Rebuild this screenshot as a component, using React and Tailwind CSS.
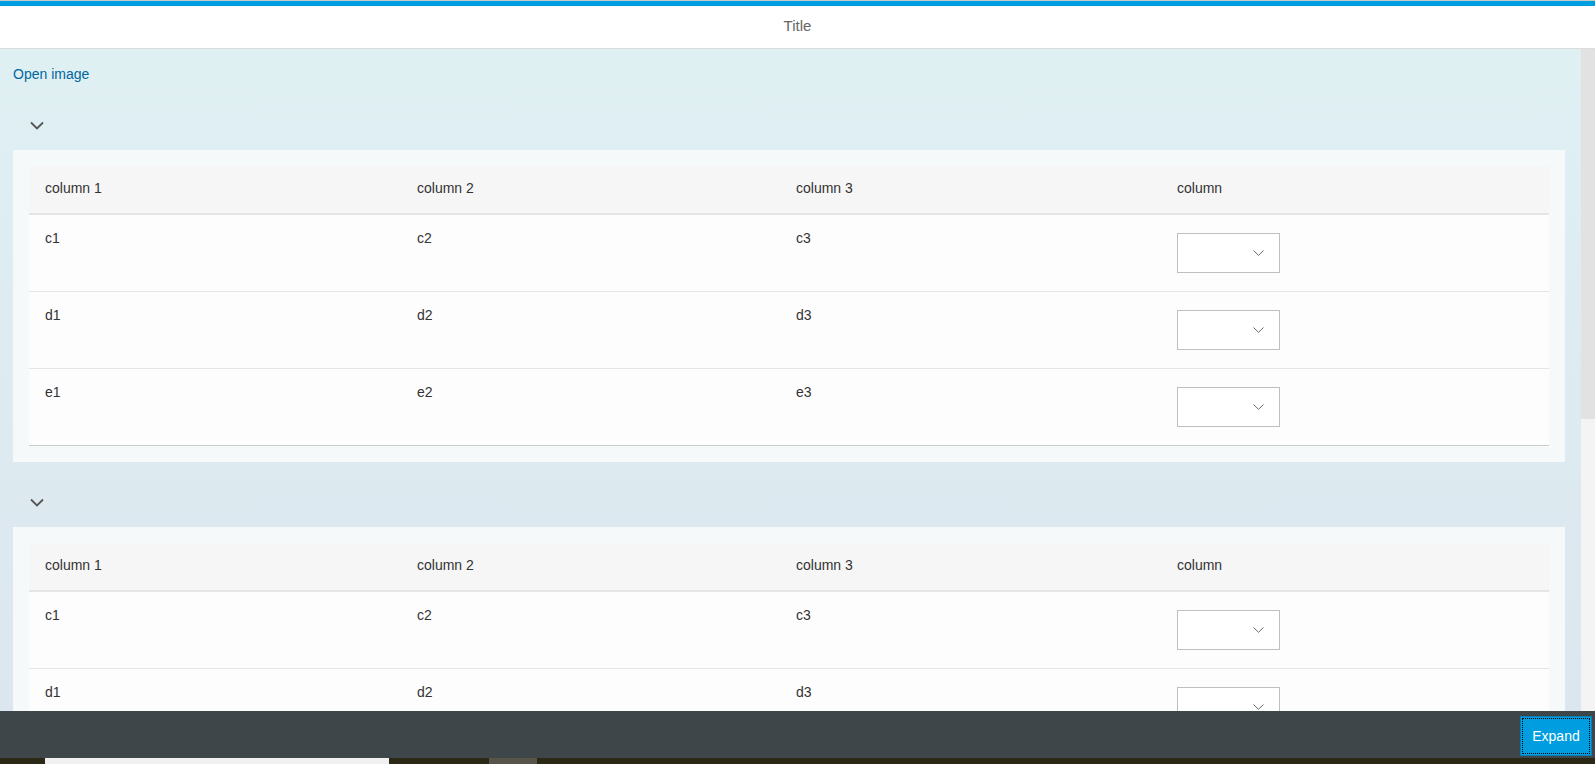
import React from 'react';

const rows = [
  ['c1', 'c2', 'c3'],
  ['d1', 'd2', 'd3'],
  ['e1', 'e2', 'e3'],
];

const gridCols = 'grid grid-cols-[372px_379px_381px_1fr]';

const Chevron = ({ className }) => (
  <svg width="14" height="9" viewBox="0 0 14 9" className={className}>
    <path d="M1 1.5 L7 7.5 L13 1.5" fill="none" stroke="currentColor" strokeWidth="1.8" />
  </svg>
);

const Select = () => (
  <div className="w-[103px] h-[40px] border border-[#bfbfbf] bg-white flex items-center justify-end pr-[15px]">
    <svg width="11" height="6" viewBox="0 0 11 6" className="text-[#6a6a6a]">
      <path d="M0.5 0.5 L5.5 5.3 L10.5 0.5" fill="none" stroke="currentColor" strokeWidth="1" />
    </svg>
  </div>
);

const TableCard = ({ items }) => (
  <div className="bg-[#f5f9fa] px-4 pt-4 pb-4">
    {/* Header */}
    <div className={`${gridCols} h-[49px] bg-[#f6f6f6] border-b-2 border-[#e5e5e5] items-center pb-[2px]`}>
      {['column 1', 'column 2', 'column 3', 'column'].map((c) => (
        <div key={c} className="pl-4">{c}</div>
      ))}
    </div>

    {/* Rows */}
    {items.map((r, i) => (
      <div
        key={i}
        className={`${gridCols} h-[77px] bg-[#fdfdfd] border-b ${
          i === items.length - 1 ? 'border-[#cccccc]' : 'border-[#e5e5e5]'
        }`}
      >
        {r.map((cell) => (
          <div key={cell} className="pl-4 pt-[15px] leading-4">{cell}</div>
        ))}
        <div className="pl-4 pt-[18px]">
          <Select />
        </div>
      </div>
    ))}
  </div>
);

const Section = ({ className, items }) => (
  <div className={className}>
    <div className="h-[50px] flex items-center pl-[17px]">
      <Chevron className="text-[#555]" />
    </div>
    <TableCard items={items} />
  </div>
);

export default function App() {
  return (
    <div className="w-[1595px] h-[764px] overflow-hidden flex flex-col text-[14px] text-[#333] font-['Liberation_Sans',Arial,sans-serif]">
      {/* Top shell bar */}
      <div className="h-px bg-[#c9c9c9]" />
      <div className="h-[5px] bg-[#009de0]" />
      <div className="h-[43px] bg-white border-b border-[#dcdcdc] flex items-center justify-center pb-px">
        <span className="text-[#666] text-[15px]">Title</span>
      </div>

      {/* Content + scrollbar */}
      <div className="flex-1 flex min-h-0">
        <div className="flex-1 min-w-0 overflow-hidden bg-gradient-to-b from-[#dff0f3] to-[#dce6ee] pl-[13px] pr-4">
          <div className="pt-[17px] leading-4">
            <a className="text-[#00679e] cursor-pointer">Open image</a>
          </div>
          <Section className="mt-[18px]" items={rows} />
          <Section className="mt-[15px]" items={rows.slice(0, 2)} />
        </div>
        <div className="w-[14px] flex flex-col bg-[#f4f4f4]">
          <div className="h-[370px] bg-[#e2e2e2]" />
        </div>
      </div>

      {/* Footer */}
      <div className="h-[47px] bg-[#3f4649] flex justify-end pt-[5px] pr-[3px]">
        <button className="w-[72px] h-[40px] bg-[#009de0] border border-[#0a7fb8] text-white text-[14px] outline-1 outline-dotted outline-black -outline-offset-[3px]">
          Expand
        </button>
      </div>

      {/* Taskbar strip */}
      <div className="h-[6px] flex bg-[#2b2915]">
        <div className="w-[45px]" />
        <div className="w-[344px] bg-[#f0f0f0]" />
        <div className="w-[100px]" />
        <div className="w-[48px] bg-[#57544a]" />
      </div>
    </div>
  );
}
